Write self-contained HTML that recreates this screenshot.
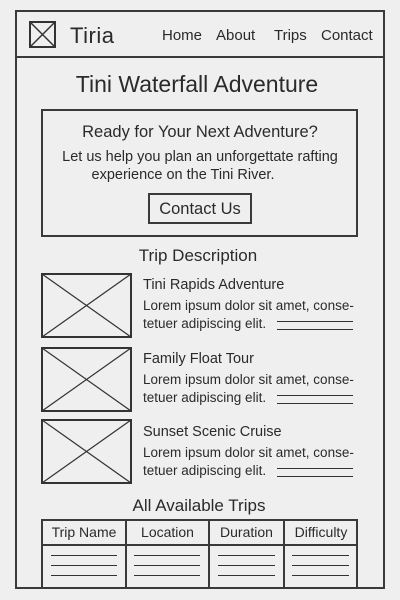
<!DOCTYPE html>
<html><head><meta charset="utf-8"><style>
*{margin:0;padding:0;box-sizing:border-box}
body{width:400px;height:600px;background:#efefef;position:relative;overflow:hidden;font-family:"Liberation Sans",sans-serif;color:#2a2a2a}
.a{position:absolute}
.b{position:absolute;border:2px solid #3a3a3a}
.t{position:absolute;white-space:nowrap;line-height:20px;height:20px}
.c{left:0;width:400px;text-align:center}
.ln{position:absolute;height:0;border-top:1.5px solid #333}
</style></head><body>
<div class="b" style="left:15px;top:10px;width:370px;height:579px"></div>
<div class="a" style="left:16px;top:56px;width:368px;border-top:2px solid #3a3a3a"></div>
<svg class="a" style="left:29px;top:21px" width="27" height="27"><rect x="1" y="1" width="25" height="25" fill="none" stroke="#333" stroke-width="2"/><path d="M1 1L26 26M26 1L1 26" stroke="#333" stroke-width="1.5"/></svg>
<div class="t" style="left:70px;top:25px;font-size:22px;line-height:22px;height:22px;letter-spacing:0.5px">Tiria</div>
<div class="t" style="left:162px;top:26px;font-size:15px">Home</div>
<div class="t" style="left:216px;top:26px;font-size:15px">About</div>
<div class="t" style="left:274px;top:26px;font-size:15px">Trips</div>
<div class="t" style="left:321px;top:26px;font-size:15px">Contact</div>
<div class="t c" style="top:72px;font-size:23px;line-height:24px;height:24px;left:-3px">Tini Waterfall Adventure</div>
<div class="b" style="left:41px;top:109px;width:317px;height:128px"></div>
<div class="t c" style="top:122px;font-size:16.5px">Ready for Your Next Adventure?</div>
<div class="t c" style="top:147px;font-size:14.5px">Let us help you plan an unforgettate rafting</div>
<div class="t c" style="top:165px;font-size:14.5px;left:-17px">experience on the Tini River.</div>
<div class="b" style="left:148px;top:193px;width:104px;height:31px"></div>
<div class="t c" style="top:199px;font-size:16.5px">Contact Us</div>
<div class="t c" style="top:246px;font-size:17px;left:-2px">Trip Description</div>

<svg class="a" style="left:41px;top:273px" width="92" height="66"><rect x="1" y="1" width="89" height="63" fill="none" stroke="#333" stroke-width="2"/><path d="M1 1L90 64M90 1L1 64" stroke="#333" stroke-width="1.2"/></svg>
<div class="t" style="left:143px;top:275px;font-size:14.5px">Tini Rapids Adventure</div>
<div class="t" style="left:143px;top:296px;font-size:13.5px">Lorem ipsum dolor sit amet, conse-</div>
<div class="t" style="left:143px;top:314px;font-size:13.5px">tetuer adipiscing elit.</div>
<div class="ln" style="left:277px;top:321px;width:76px"></div><div class="ln" style="left:277px;top:329px;width:76px"></div>

<svg class="a" style="left:41px;top:347px" width="92" height="66"><rect x="1" y="1" width="89" height="63" fill="none" stroke="#333" stroke-width="2"/><path d="M1 1L90 64M90 1L1 64" stroke="#333" stroke-width="1.2"/></svg>
<div class="t" style="left:143px;top:349px;font-size:14.5px">Family Float Tour</div>
<div class="t" style="left:143px;top:370px;font-size:13.5px">Lorem ipsum dolor sit amet, conse-</div>
<div class="t" style="left:143px;top:388px;font-size:13.5px">tetuer adipiscing elit.</div>
<div class="ln" style="left:277px;top:395px;width:76px"></div><div class="ln" style="left:277px;top:403px;width:76px"></div>

<svg class="a" style="left:41px;top:419px" width="92" height="66"><rect x="1" y="1" width="89" height="63" fill="none" stroke="#333" stroke-width="2"/><path d="M1 1L90 64M90 1L1 64" stroke="#333" stroke-width="1.2"/></svg>
<div class="t" style="left:143px;top:422px;font-size:14.5px">Sunset Scenic Cruise</div>
<div class="t" style="left:143px;top:443px;font-size:13.5px">Lorem ipsum dolor sit amet, conse-</div>
<div class="t" style="left:143px;top:461px;font-size:13.5px">tetuer adipiscing elit.</div>
<div class="ln" style="left:277px;top:468px;width:76px"></div><div class="ln" style="left:277px;top:476px;width:76px"></div>

<div class="t c" style="top:496px;font-size:17px;left:-1px">All Available Trips</div>
<div class="b" style="left:41px;top:519px;width:317px;height:70px"></div>
<div class="a" style="left:42px;top:544px;width:315px;border-top:2px solid #3a3a3a"></div>
<div class="a" style="left:125px;top:520px;height:68px;border-left:2px solid #3a3a3a"></div>
<div class="a" style="left:208px;top:520px;height:68px;border-left:2px solid #3a3a3a"></div>
<div class="a" style="left:283px;top:520px;height:68px;border-left:2px solid #3a3a3a"></div>
<div class="t" style="left:42px;width:84px;text-align:center;top:522px;font-size:14px">Trip Name</div>
<div class="t" style="left:126px;width:83px;text-align:center;top:522px;font-size:14px">Location</div>
<div class="t" style="left:209px;width:75px;text-align:center;top:522px;font-size:14px">Duration</div>
<div class="t" style="left:284px;width:74px;text-align:center;top:522px;font-size:14px">Difficulty</div>
<div class="ln" style="left:51px;top:555px;width:66px"></div><div class="ln" style="left:51px;top:565px;width:66px"></div><div class="ln" style="left:51px;top:575px;width:66px"></div>
<div class="ln" style="left:134px;top:555px;width:66px"></div><div class="ln" style="left:134px;top:565px;width:66px"></div><div class="ln" style="left:134px;top:575px;width:66px"></div>
<div class="ln" style="left:218px;top:555px;width:57px"></div><div class="ln" style="left:218px;top:565px;width:57px"></div><div class="ln" style="left:218px;top:575px;width:57px"></div>
<div class="ln" style="left:292px;top:555px;width:57px"></div><div class="ln" style="left:292px;top:565px;width:57px"></div><div class="ln" style="left:292px;top:575px;width:57px"></div>
</body></html>
